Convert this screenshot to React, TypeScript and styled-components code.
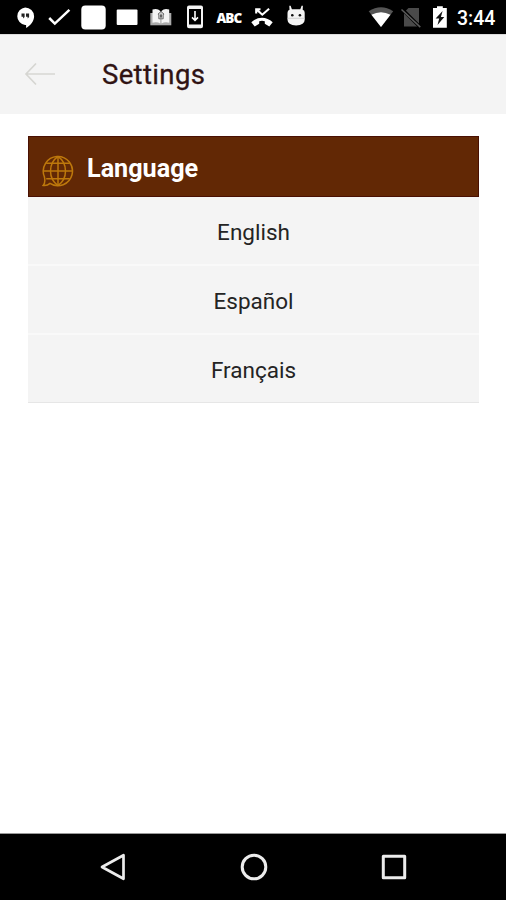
import React from "react";
import styled, { createGlobalStyle } from "styled-components";

const GlobalStyle = createGlobalStyle`
  * { box-sizing: border-box; }
  body { margin: 0; background: #fff; font-family: Roboto, sans-serif; }
`;

const Screen = styled.div`
  display: flex;
  flex-direction: column;
  width: 506px;
  height: 900px;
  overflow: hidden;
  background: #fff;
`;

const StatusBar = styled.header`
  display: flex;
  justify-content: space-between;
  height: 34px;
  flex: none;
  padding-left: 8px;
  background: #000;
  color: #fff;
`;

const IconGroup = styled.div`
  display: flex;
`;

const StatusIcon = styled.svg<{ $width?: number }>`
  display: block;
  flex: none;
  width: ${(p) => p.$width ?? 34}px;
  height: 34px;
`;

const KeyboardLabel = styled.div`
  width: 34px;
  padding-left: 4.5px;
  font: 800 13.5px/36px "Open Sans", sans-serif;
  letter-spacing: -1px;
`;

const Clock = styled.time`
  width: 54px;
  padding-left: 5px;
  font-size: 19.5px;
  font-weight: 500;
  line-height: 37px;
`;

const TitleBar = styled.div`
  display: flex;
  align-items: center;
  flex: none;
  height: 79.5px;
  padding-left: 24px;
  border-top: 1px solid #dcdcdc;
  background: #f4f4f4;
`;

const BackArrow = styled.svg`
  width: 32px;
  height: 24px;
  margin-right: 46px;
`;

const Title = styled.h1`
  margin: 2px 0 0;
  color: #301313;
  font-size: 27.5px;
  font-weight: 400;
  line-height: 32px;
  letter-spacing: 0.35px;
  -webkit-text-stroke: 0.3px #301313;
`;

const Content = styled.main`
  flex: 1;
  padding: 22.5px 27px 0 28px;
`;

const CardHeader = styled.div`
  display: flex;
  align-items: center;
  height: 61px;
  padding-left: 13px;
  border: 1px solid #491003;
  background: #622805;
`;

const GlobeIcon = styled.svg`
  width: 32px;
  height: 34px;
  margin: 9px 13px 0 0;
`;

const CardTitle = styled.h2`
  margin: 4px 0 0;
  color: #fff;
  font-size: 25.2px;
  font-weight: 700;
  line-height: 32px;
`;

const LanguageList = styled.ul`
  margin: 0;
  padding: 0;
  list-style: none;
`;

const LanguageRow = styled.li`
  height: 69px;
  border-bottom: 2px solid #f9f9f9;
  background: #f4f4f4;
  color: #242424;
  font-size: 22.5px;
  line-height: 70px;
  text-align: center;

  &:last-child {
    border-bottom: 1px solid #e6e6e6;
    height: 68px;
  }
`;

const NavBar = styled.footer`
  display: flex;
  align-items: center;
  justify-content: center;
  gap: 108.5px;
  flex: none;
  height: 67px;
  padding-left: 1px;
  border-top: 1px solid #999;
  background: #000;
`;

const NavIcon = styled.svg`
  width: 32px;
  height: 32px;
  fill: none;
  stroke: #ececec;
  stroke-width: 3;
  stroke-linejoin: round;
`;

const languages = ["English", "Español", "Français"];

export default function App() {
  return (
    <>
      <GlobalStyle />
      <Screen>
        <StatusBar>
          <IconGroup>
            <StatusIcon viewBox="0 0 34 34">
              <path d="M17.2 7.5a8.9 8.9 0 0 1 8.9 8.8c0 5-3.5 9.3-8 11.7v-3h-1a8.8 8.8 0 0 1 .1-17.5Z" fill="#fff" />
              <path d="M13.5 13.5h3.1v3.5l-1.5 1.6v-1.8h-1.6ZM18 13.5h3.1v3.5l-1.5 1.6v-1.8H18Z" fill="#222" />
            </StatusIcon>
            <StatusIcon viewBox="0 0 34 34">
              <path d="m7.2 18 5.6 5.6L27.4 9.8" fill="none" stroke="#fff" strokeWidth="2.5" />
            </StatusIcon>
            <StatusIcon viewBox="0 0 34 34">
              <rect x="5.3" y="5.4" width="24.4" height="24.2" rx="4" fill="#fff" />
            </StatusIcon>
            <StatusIcon viewBox="0 0 34 34">
              <rect x="6.7" y="9.5" width="20.8" height="15.5" rx="1" fill="#fff" />
            </StatusIcon>
            <StatusIcon viewBox="0 0 34 34">
              <path d="M6.3 13h21v12.3h-21Z" fill="#aaa" />
              <path d="M8.5 9.5q5-1.5 7.8 1.4v12.5Q13 21.7 8.5 22.7ZM17.5 10.9q2.7-2.9 7.7-1.4v13.2q-4.3-1-7.7.7Z" fill="#f4f4f4" />
              <path d="m17 11.5 3 2.5-.8 1v3.8h-4.4V15l-.8-1Z" fill="#ccc" stroke="#666" strokeWidth=".9" />
              <path d="M17 14.5v3" stroke="#333" strokeWidth="1.4" />
            </StatusIcon>
            <StatusIcon viewBox="0 0 34 34">
              <rect x="10" y="6.5" width="14" height="20.7" rx="1" fill="none" stroke="#f4f4f4" strokeWidth="2" />
              <path d="M10 25.8h14M10 7.7h14" stroke="#f4f4f4" strokeWidth="2.5" />
              <path d="M17 11v9M14 17.4l3 3 3-3" fill="none" stroke="#fff" strokeWidth="1.6" />
            </StatusIcon>
            <KeyboardLabel>ABC</KeyboardLabel>
            <StatusIcon viewBox="0 0 34 34">
              <path d="M5.3 22.3c6.2-6.2 15.2-6.2 21.4 0l-3.4 4.3-4.5-2.8v-2.6q-2.8-.7-5.6 0v2.6l-4.5 2.8Z" fill="#fff" />
              <path d="M10.2 8.2v5.2M9.3 9.2h5.2M10.5 9.4l5.8 5.3 6.8-6" fill="none" stroke="#fff" strokeWidth="2.1" />
            </StatusIcon>
            <StatusIcon viewBox="0 0 34 34">
              <path d="M7.5 12.7q0-2.4 2-2.9L9.3 5.8h1.3l1.3 3.4h8.4l1.3-3.4h1.3l-.2 4q2 .5 2 2.9v7q0 5.2-8.6 5.8-8.6-.6-8.6-5.8Z" fill="#f4f4f4" />
              <path d="M7.5 18.3h17.2" stroke="#c8c8c8" strokeWidth=".8" />
              <circle cx="12.3" cy="15.2" r="1.3" fill="#111" />
              <circle cx="19.9" cy="15.2" r="1.3" fill="#111" />
            </StatusIcon>
          </IconGroup>
          <IconGroup>
            <StatusIcon $width={30} viewBox="366 0 30 34">
              <path d="M368.7 11.2Q381 3.4 393.2 11.2L381 27Z" fill="#555" />
              <path d="M371.4 14.8q9.6-5 19.1 0L381 27Z" fill="#fff" />
            </StatusIcon>
            <StatusIcon $width={30} viewBox="396 0 30 34">
              <path d="M404 12.5 408.5 8H419v18.5h-15Z" fill="#4a4a4a" />
              <path d="m402.5 9.5 18 18" stroke="#000" strokeWidth="3.2" />
              <path d="m401.5 9.5 18.8 17.6" stroke="#5c5c5c" strokeWidth="1.5" />
            </StatusIcon>
            <StatusIcon $width={26} viewBox="426 0 26 34">
              <path d="M437 6.3h5.8V8h4v19.7H433V8h4Z" fill="#fff" />
              <path d="m442.6 11-7 7.6h3.6L437.5 25l6.8-8h-3.4Z" fill="#111" />
            </StatusIcon>
            <Clock>3:44</Clock>
          </IconGroup>
        </StatusBar>
        <TitleBar>
          <BackArrow viewBox="0 0 32 24" fill="none" stroke="#d6d6d2" strokeWidth="1.7">
            <path d="M12 1.5 2 12l10 10.5M2 12h29" />
          </BackArrow>
          <Title>Settings</Title>
        </TitleBar>
        <Content>
          <CardHeader>
            <GlobeIcon viewBox="0 0 32 34" fill="none" stroke="#bd780c" strokeWidth="1.5">
              <path d="M2.3 22.5A14.6 14.6 0 1 1 8 29.4Q5 32 1.2 31.4 3.8 28.5 2.3 22.5ZM8 29.4q3.5 2.2 7.8 2.2" />
              <path d="M16 2.4v29.2M1.5 17h29M4.2 9.2h23.6M4.2 24.8h23.6" />
              <path d="M16 2.4c-10 7.2-10 22 0 29.2M16 2.4c10 7.2 10 22 0 29.2" />
            </GlobeIcon>
            <CardTitle>Language</CardTitle>
          </CardHeader>
          <LanguageList>
            {languages.map((language) => (
              <LanguageRow key={language}>{language}</LanguageRow>
            ))}
          </LanguageList>
        </Content>
        <NavBar>
          <NavIcon viewBox="0 0 32 32">
            <path d="M26.5 4.2v23.6L5 16Z" strokeWidth="2.7" />
          </NavIcon>
          <NavIcon viewBox="0 0 32 32">
            <circle cx="16" cy="16" r="11.8" />
          </NavIcon>
          <NavIcon viewBox="0 0 32 32">
            <rect x="5.3" y="5.3" width="21.4" height="21.4" />
          </NavIcon>
        </NavBar>
      </Screen>
    </>
  );
}
